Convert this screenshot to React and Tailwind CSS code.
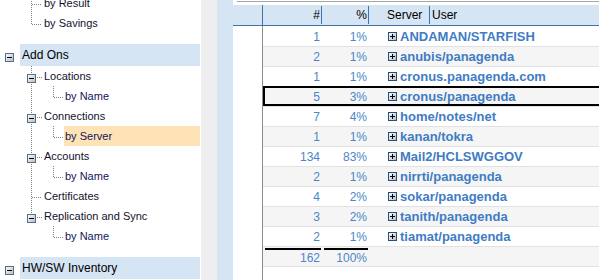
// Tree navigator on the left, server/user breakdown grid on the right.

const SIDEBAR = [
  { label: "by Result", level: 1, last: false },
  { label: "by Savings", level: 1, last: true },
  { gap: true },
  { label: "Add Ons", level: 0, box: true, selected: true },
  { label: "Locations", level: 1, box: true, last: false },
  { label: "by Name", level: 2, last: true, parentLast: false },
  { label: "Connections", level: 1, box: true, last: false },
  { label: "by Server", level: 2, last: true, parentLast: false, current: true },
  { label: "Accounts", level: 1, box: true, last: false },
  { label: "by Name", level: 2, last: true, parentLast: false },
  { label: "Certificates", level: 1, last: false },
  { label: "Replication and Sync", level: 1, box: true, last: true },
  { label: "by Name", level: 2, last: true, parentLast: true },
  { gap: true },
  { label: "HW/SW Inventory", level: 0, box: true, selected: true },
];

const ROWS = [
  [1, "1%", "ANDAMAN/STARFISH"],
  [2, "1%", "anubis/panagenda"],
  [1, "1%", "cronus.panagenda.com"],
  [5, "3%", "cronus/panagenda"],
  [7, "4%", "home/notes/net"],
  [1, "1%", "kanan/tokra"],
  [134, "83%", "Mail2/HCLSWGGOV"],
  [2, "1%", "nirrti/panagenda"],
  [4, "2%", "sokar/panagenda"],
  [3, "2%", "tanith/panagenda"],
  [2, "1%", "tiamat/panagenda"],
];

const DOT = { stroke: "#808080", strokeDasharray: "1 1", shapeRendering: "crispEdges" };

function MinusBox({ x, y }) {
  return (
    <g shapeRendering="crispEdges">
      <rect x={x + 0.5} y={y + 0.5} width="8" height="8" fill="url(#boxfill)" stroke="#52708e" />
      <line x1={x + 2} y1={y + 4.5} x2={x + 7} y2={y + 4.5} stroke="#000" />
    </g>
  );
}

function Lines({ item }) {
  if (item.level === 0) {
    return (
      <svg width="20" height="22" className="shrink-0">
        <MinusBox x={5} y={9} />
      </svg>
    );
  }
  if (item.level === 1) {
    return (
      <svg width="42" height="20" className="shrink-0">
        {item.box ? (
          <>
            <line x1="31.5" y1="0" x2="31.5" y2="8" {...DOT} />
            {!item.last && <line x1="31.5" y1="18" x2="31.5" y2="20" {...DOT} />}
            <line x1="37" y1="11.5" x2="42" y2="11.5" {...DOT} />
            <MinusBox x={27} y={8} />
          </>
        ) : (
          <>
            <line x1="31.5" y1="0" x2="31.5" y2={item.last ? 12 : 20} {...DOT} />
            <line x1="32" y1="11.5" x2="43" y2="11.5" {...DOT} />
          </>
        )}
      </svg>
    );
  }
  return (
    <svg width="64" height="20" className="shrink-0">
      {!item.parentLast && <line x1="31.5" y1="0" x2="31.5" y2="20" {...DOT} />}
      <line x1="53.5" y1="0" x2="53.5" y2={item.last ? 12 : 20} {...DOT} />
      <line x1="54" y1="11.5" x2="64" y2="11.5" {...DOT} />
    </svg>
  );
}

function TreeRow({ item }) {
  if (item.gap) return <div className="h-[11px]" />;

  const color =
    item.level === 0 ? "text-black" : item.level === 1 ? "text-[#12122e]" : "text-[#14145a]";
  const size = item.level === 0 ? "text-[12px]" : "text-[11px]";
  const bg = item.selected ? "bg-[#d5e5f3]" : item.current ? "bg-[#fee3b6]" : "";
  const pad = item.level === 2 ? "pl-[1px]" : "pl-[2px]";

  return (
    <div className={`flex ${item.level === 0 ? "h-[22px]" : "h-[20px]"}`}>
      <Lines item={item} />
      <div className={`flex-1 mr-[1px] flex items-center whitespace-nowrap ${pad} ${bg} ${color} ${size}`}>
        {item.label}
      </div>
    </div>
  );
}

function PlusBox() {
  return (
    <svg width="9" height="9" className="shrink-0">
      <g shapeRendering="crispEdges">
        <rect x="0.5" y="0.5" width="8" height="8" fill="url(#boxfill)" stroke="#1f4f7c" />
        <line x1="2" y1="4.5" x2="7" y2="4.5" stroke="#000" />
        <line x1="4.5" y1="2" x2="4.5" y2="7" stroke="#000" />
      </g>
    </svg>
  );
}

function DataRow({ row, index }) {
  const [count, pct, name] = row;
  const selected = index === 3;
  return (
    <div
      className={`relative flex items-center h-[20px] border-b border-[#e2e2e2] ${
        index % 2 ? "bg-[#f5f5f5]" : "bg-white"
      }`}
    >
      <div className="w-[59px] pr-[2px] text-right text-[12px] text-[#4a86c8]">{count}</div>
      <div className="w-[47px] pr-[2px] text-right text-[12px] text-[#4a86c8]">{pct}</div>
      <div className="pl-[19px] flex items-center">
        <PlusBox />
        <span className="ml-[3px] text-[13px] font-bold text-[#3f7cc4] whitespace-nowrap">{name}</span>
      </div>
      {selected && (
        <div className="absolute left-0 right-[-4px] top-[-1px] h-[20px] border-2 border-black" />
      )}
    </div>
  );
}

export default function App() {
  return (
    <div className="w-[599px] h-[280px] overflow-hidden flex bg-white font-['Liberation_Sans',Arial,sans-serif]">
      <svg className="absolute w-0 h-0">
        <defs>
          <linearGradient id="boxfill" x1="0" y1="0" x2="1" y2="1">
            <stop offset="0" stopColor="#ffffff" />
            <stop offset="1" stopColor="#b9b9b9" />
          </linearGradient>
        </defs>
      </svg>

      {/* tree */}
      <div className="w-[201px] shrink-0 flex flex-col mt-[-7px]">
        {SIDEBAR.map((item, i) => (
          <TreeRow key={i} item={item} />
        ))}
      </div>

      <div className="w-[16px] shrink-0 bg-[#eeeeee]" />
      <div className="w-[16px] shrink-0 bg-[#d5e5f3]" />

      {/* grid */}
      <div className="flex-1 flex flex-col min-w-0">
        <div className="h-[5px] pt-[1px] pl-[4px]">
          <div className="h-[1px] bg-[#a5a5a5]" />
        </div>

        <div className="h-[21px] flex bg-[#d5e5f3] border-b border-[#3c74ae] text-[12px] text-black">
          <div className="w-[29px] shrink-0" />
          <div className="w-[1px] bg-[#3c74ae]" />
          <div className="w-[58px] shrink-0 pr-[1px] flex items-center justify-end">#</div>
          <div className="w-[1px] my-[1px] bg-[#3c74ae]" />
          <div className="w-[46px] shrink-0 pr-[1px] flex items-center justify-end">%</div>
          <div className="w-[1px] my-[1px] bg-[#3c74ae]" />
          <div className="w-[60px] shrink-0 pl-[18px] flex items-center">Server</div>
          <div className="w-[1px] my-[1px] bg-[#3c74ae]" />
          <div className="pl-[2px] flex items-center">User</div>
        </div>

        <div className="flex-1 flex">
          <div className="w-[30px] shrink-0 border-r border-[#8c8c8c]" />
          <div className="flex-1 flex flex-col pt-[1px]">
            {ROWS.map((row, i) => (
              <DataRow key={i} row={row} index={i} />
            ))}
            <div className="flex h-[20px] border-b border-[#e2e2e2] bg-[#f5f5f5] text-[12px] text-[#4a86c8]">
              <div className="w-[59px] shrink-0 pl-[2px] pr-[1px] pt-[1px]">
                <div className="h-full border-t-2 border-black flex items-center justify-end pr-[1px]">162</div>
              </div>
              <div className="w-[47px] shrink-0 pl-[2px] pr-[1px] pt-[1px]">
                <div className="h-full border-t-2 border-black flex items-center justify-end pr-[1px]">100%</div>
              </div>
            </div>
          </div>
        </div>
      </div>
    </div>
  );
}
